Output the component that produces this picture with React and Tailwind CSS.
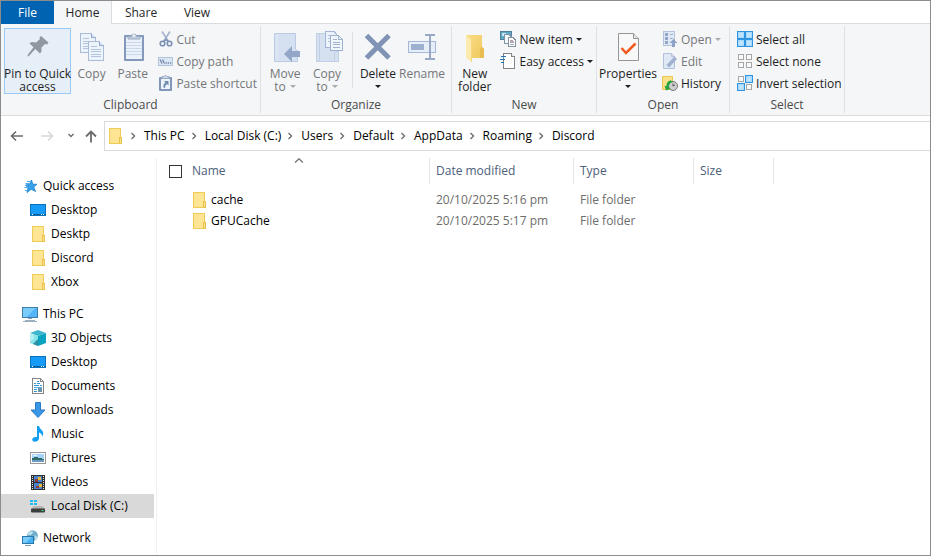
import React from "react";

/* ---------- icons ---------- */

function Svg({ w = 16, h = 16, crisp = true, children }) {
  return (
    <svg
      width={w}
      height={h}
      viewBox={`0 0 ${w} ${h}`}
      fill="none"
      className="block shrink-0"
      shapeRendering={crisp ? "crispEdges" : "auto"}
      aria-hidden="true"
    >
      {children}
    </svg>
  );
}

const PinIcon = () => (
  <Svg w={32} h={32} crisp={false}>
    <path
      fill="#8f989e"
      d="M19 5L26.500 11.500L25 13.500L23 13L19.500 16.500L19.500 20.500L18 22.500L13.200 18L6.500 25.500L5.500 25L6 23.500L11.500 16.200L7.500 12.500L9.500 11L14 11.500L18 8L17.500 6.500Z"
    />
  </Svg>
);

const Sheet = ({ x, y }) => (
  <g transform={`translate(${x} ${y})`}>
    <path d="M.5.5H11.500L15.500 4.500V19.500H.5Z" fill="#edf3fb" stroke="#aabbd6" />
    <path d="M11.500.5V4.500H15.500" fill="#d5e1f2" stroke="#94a8c8" />
    <path d="M3 5.500H9M3 8.500H13M3 10.500H13M3 13.500H13M3 15.500H13" stroke="#b5c5dd" />
  </g>
);

const CopyIcon = () => (
  <Svg w={32} h={32}>
    <Sheet x={4} y={2} />
    <Sheet x={12} y={10} />
  </Svg>
);

const PasteIcon = () => (
  <Svg w={32} h={32} crisp={false}>
    <rect x="7" y="4" width="20" height="26" rx="1" fill="#8498bb" />
    <rect x="9" y="6" width="16" height="22" fill="#eaf1fb" />
    <path d="M9 11.500H25M9 14.500H25M9 17.500H25M9 20.500H25M9 23.500H25" stroke="#cbd8ea" />
    <path d="M11 8V5.500H14.500A2.500 2.500 0 0 1 19.500 5.500H23V8Z" fill="#c3cedd" stroke="#9aaac2" />
    <circle cx="17" cy="4.500" r="1.200" fill="#f4f6f9" />
  </Svg>
);

const CutIcon = () => (
  <Svg crisp={false}>
    <path d="M5 .5L11.500 10.500M13 .5L6.500 10.500" stroke="#a5b4cc" strokeWidth="1.600" />
    <circle cx="5.500" cy="12.500" r="2.300" stroke="#7c91b5" strokeWidth="1.600" />
    <circle cx="12.500" cy="12.500" r="2.300" stroke="#7c91b5" strokeWidth="1.600" />
    <path d="M7 10.500L9 8.500L11 10.500" stroke="#7c91b5" strokeWidth="1.500" />
  </Svg>
);

const CopyPathIcon = () => (
  <Svg crisp={false}>
    <rect x="1.500" y="4.500" width="14" height="8" fill="#dbe6f5" stroke="#b3c3dc" />
    <path d="M3 6.500L5 10.500M5.500 6.500L7.500 10.500" stroke="#6d81a5" strokeWidth="1.200" />
    <path d="M8.500 10H9.800M10.700 10H12M13 10H14.200" stroke="#6d81a5" strokeWidth="1.300" />
  </Svg>
);

const ShortcutIcon = () => (
  <Svg crisp={false}>
    <g transform="translate(1 0)">
      <rect x="1" y="2" width="13" height="14" rx="1" fill="#8196ba" />
      <rect x="3" y="4" width="9" height="10" fill="#edf3fb" />
      <path d="M4 3.500V1.500H6L7 .5H8L9 1.500H11V3.500Z" fill="#c9d4e4" stroke="#9aabc5" />
      <path d="M6 6H10.500V10.500L9 9Q7 10 7 13L5.500 12.500Q5 9 7.500 7.500Z" fill="#6f88b2" />
    </g>
  </Svg>
);

const MoveIcon = () => (
  <Svg w={32} h={32} crisp={false}>
    <path d="M5.500 2.500H26.500V18L28.500 20V30.500H5.500Z" fill="#d5e0f1" stroke="#bccbe3" />
    <path d="M8 3V30" stroke="#e5edf8" />
    <path d="M15 23L23 15V20H31V26H23V31Z" fill="#93a7c9" />
  </Svg>
);

const CopyToIcon = () => (
  <Svg w={32} h={32}>
    <path d="M5.500 2.500H25V20H27.500V30.500H5.500Z" fill="#d5e0f1" stroke="#c2d0e6" />
    <path d="M8.500 3V30M23.500 21V30" stroke="#c2d0e6" />
    <path d="M14.500.5H23L26 4V16.500H14.500Z" fill="#edf3fb" stroke="#a5b7d4" />
    <path d="M17 4.500H20M17 7.500H20M17 10.500H20" stroke="#b5c5dd" />
    <path d="M19.500 4.500H27.500L31 8V19.500H19.500Z" fill="#f1f6fc" stroke="#9db0d0" />
    <path d="M27.500 4.500V8H31M22 8.500H26M22 11.500H29M22 13.500H29M22 16.500H29" stroke="#a0b2cf" />
  </Svg>
);

const DeleteIcon = () => (
  <Svg w={32} h={32} crisp={false}>
    <path d="M4.500 4.500L27 27M27 4.500L4.500 27" stroke="#8193b4" strokeWidth="5" />
  </Svg>
);

const RenameIcon = () => (
  <Svg w={32} h={32}>
    <rect x="2.500" y="10.500" width="27" height="11" fill="#e6eefa" stroke="#a5b8d9" />
    <rect x="5" y="13" width="13" height="6" fill="#9db0d0" />
    <path d="M24 5V27" stroke="#97a9c7" strokeWidth="2" />
    <path d="M19 4H23L24 5L25 4H29M19 28H23L24 27L25 28H29" stroke="#97a9c7" strokeWidth="2" />
  </Svg>
);

const NewFolderIcon = () => (
  <Svg w={32} h={32} crisp={false}>
    <defs>
      <linearGradient id="nf" x1="0" y1="0" x2="1" y2="1">
        <stop offset="0" stopColor="#f9dd87" />
        <stop offset="1" stopColor="#f0c75c" />
      </linearGradient>
    </defs>
    <path d="M7 4H23V16L25 18V27H7Z" fill="url(#nf)" />
    <path d="M23 16L25 18V27H21V18Z" fill="#e9bd50" />
    <path d="M7 4L12.500 9V31L7 27Z" fill="#fdeaae" />
    <path d="M12.500 9V31" stroke="#f5d67c" />
  </Svg>
);

const NewItemIcon = () => (
  <Svg>
    <rect x=".5" y=".5" width="11" height="8" fill="#5fa9c5" stroke="#517f9c" />
    <rect x="2" y="2" width="4" height="3" fill="#c8e8f3" />
    <path d="M4.500 3.500H9L11.500 6V12.500H4.500Z" fill="#f5f8fa" stroke="#8296a6" />
    <path d="M8.500 6.500H13L15.500 9V15.500H8.500Z" fill="#fff" stroke="#8593a0" />
    <path d="M10 9.500H13M10 11.500H14M10 13.500H14" stroke="#9babbb" />
    <path d="M10 10.500H14" stroke="#dfa0a0" />
  </Svg>
);

const EasyAccessIcon = () => (
  <Svg>
    <path d="M3.500.5H11.500L14.500 3.500V15.500H3.500Z" fill="#fff" stroke="#858585" />
    <path d="M11.500.5V3.500H14.500" fill="#e7e7e7" stroke="#858585" />
    <path d="M1 3.500H6M0 6.500H5M1 9.500H4" stroke="#1d75bd" strokeWidth="1" />
  </Svg>
);

const PropertiesIcon = () => (
  <Svg w={32} h={32} crisp={false}>
    <path d="M6.500 2.500H21.500L26.500 7.500V29.500H6.500Z" fill="#f8f8f8" stroke="#969696" />
    <path d="M21.500 2.500V7.500H26.500" fill="#e2e2e2" stroke="#969696" />
    <path d="M9.500 17L14 22L23.500 12.500" stroke="#f2591d" strokeWidth="2.500" />
  </Svg>
);

const OpenIcon = () => (
  <Svg>
    <rect x="1.500" y=".5" width="11" height="14" fill="#dfe8f5" stroke="#b2c2db" />
    <path d="M3 2H6V5H3ZM3 6H6V9H3ZM3 10H6V13H3Z" fill="#91a5c6" />
    <path d="M7.500 3.500H11M7.500 7.500H11" stroke="#9fb1ce" />
    <path d="M11.500 8L15.500 12H13V16H10V12H7.500Z" fill="#8ea3c5" />
  </Svg>
);

const EditIcon = () => (
  <Svg crisp={false}>
    <path d="M1.500.5H9.500L12.500 3.500V15.500H1.500Z" fill="#dfe8f5" stroke="#b2c2db" />
    <path d="M9.500.5V3.500H12.500" stroke="#b2c2db" />
    <path d="M4 15L4.500 12L12.500 3.500L15 6L7 14.500Z" fill="#9fb1ce" />
    <path d="M4 15L4.500 12L7 14.500Z" fill="#eef3fa" />
  </Svg>
);

const HistoryIcon = () => (
  <Svg crisp={false}>
    <path d="M.5 1.500H10.500V9H12V14.500H.5Z" fill="#fbe08a" stroke="#ecc74f" />
    <circle cx="11" cy="11" r="4.500" fill="#cfcfcf" stroke="#777" />
    <path d="M11 8.500V11L13 10" stroke="#555" />
    <path d="M8.500 5.200A6 6 0 0 0 4.500 11.500L2.500 10.500L4 15.500L8.800 13.500L7 12.500A4.500 4.500 0 0 1 11 7Z" fill="#24a343" />
  </Svg>
);

const Box = ({ x, y, on }) =>
  on ? (
    <>
      <rect x={x} y={y} width="8" height="8" fill="#2e95e3" />
      <rect x={x + 1} y={y + 1} width="6" height="6" fill="#a8d8fb" />
      <rect x={x + 2} y={y + 2} width="4" height="4" fill="#bfe4ff" />
    </>
  ) : (
    <rect x={x + 1.5} y={y + 1.5} width="5" height="5" fill="#fafafa" stroke="#a6a6a6" />
  );

const SelectIcon = ({ on }) => (
  <Svg>
    <Box x={0} y={0} on={on[0]} />
    <Box x={8} y={0} on={on[1]} />
    <Box x={0} y={8} on={on[2]} />
    <Box x={8} y={8} on={on[3]} />
  </Svg>
);

const FolderIcon = () => (
  <Svg>
    <rect x="2.500" y=".5" width="11" height="15" fill="#fee594" stroke="#f0cb55" />
    <rect x="12.500" y="9.500" width="2" height="6" fill="#fce28a" stroke="#e9c24b" />
  </Svg>
);

const StarIcon = () => (
  <Svg crisp={false}>
    <path
      d="M9.500 2L10.800 6.200L15 6.300L11.800 9L13.500 13.500L9.200 11.300L5 14.500L6 9.800L3.500 7L7.500 6.300Z"
      fill="#35a2ee"
      stroke="#1b80cc"
      strokeWidth=".8"
    />
    <path d="M5 3.500H8.500M3.500 5.500H7.500M2.500 9.500H6M3 12.500H5.500" stroke="#4fa9e4" />
  </Svg>
);

const DesktopIcon = () => (
  <Svg>
    <rect x=".5" y="2.500" width="15" height="11" fill="#169cf8" stroke="#0b72b9" />
    <path d="M1 12.500H15" stroke="#095f9e" />
    <path d="M2 12.500H3M11 12.500H12M13 12.500H14" stroke="#fff" />
  </Svg>
);

const PcIcon = () => (
  <Svg>
    <rect x=".5" y="1.500" width="15" height="10" fill="#54b6f6" stroke="#3e7ea6" />
    <path d="M1 2H13L5 11H1Z" fill="#7accfc" />
    <path d="M6 12.500H10" stroke="#8aa0b2" />
    <path d="M1 15.500H15M3 14.500H13" stroke="#9baebe" />
  </Svg>
);

const CubeIcon = () => (
  <Svg crisp={false}>
    <path d="M8 0L16 3L8 6L0 3Z" fill="#3cb6cc" />
    <path d="M0 3L8 6V16L0 13Z" fill="#86e3e8" />
    <path d="M8 6L16 3V13L8 16Z" fill="#09a2bf" />
    <path d="M0 3L4 4.500V9L0 12Z" fill="#b3f0f2" />
    <path d="M8 9V16L3 14Z" fill="#2f8fa4" />
  </Svg>
);

const DocumentIcon = () => (
  <Svg>
    <path d="M2.500.5H10.500L13.500 3.500V15.500H2.500Z" fill="#fff" stroke="#858585" />
    <path d="M10.500.5V3.500H13.500" stroke="#858585" />
    <path d="M7 3.500H9M4 5.500H6M7 5.500H10M4 7.500H9M10 7.500H12M4 11.500H7M4 13.500H7" stroke="#3195d1" />
    <path d="M4 9.500H12" stroke="#52aadd" />
    <path d="M8 10H12V14H8Z" fill="#6e94ab" />
  </Svg>
);

const DownloadIcon = () => (
  <Svg crisp={false}>
    <path d="M5.500.5H10.500V8H15L8 15.500L1 8H5.500Z" fill="#3a96e7" stroke="#2c79c2" />
  </Svg>
);

const MusicIcon = () => (
  <Svg crisp={false}>
    <path d="M7 0H9Q9.500 2.500 12 4.500Q14.500 7 12 11Q12.500 7.500 9 6.500V12.500Q8.500 15.500 5 15.800Q2 15.500 2.200 13Q3 10.500 7 11Z" fill="#109ef3" />
  </Svg>
);

const PictureIcon = () => (
  <Svg>
    <rect x=".5" y="2.500" width="15" height="11" fill="#fff" stroke="#989898" />
    <rect x="2" y="4" width="12" height="8" fill="#a5d2f6" />
    <path d="M2 8L6 7L9 8L14 9V10H2Z" fill="#2f6b69" />
    <path d="M2 10H14V12H2Z" fill="#6c9cc4" />
    <path d="M3 5.500H7" stroke="#e5f4fd" />
  </Svg>
);

const VideoIcon = () => (
  <Svg>
    <rect x="1" y="1" width="14" height="15" fill="#2e2e2e" />
    <rect x="4" y="2" width="8" height="6" fill="#4c83cf" />
    <rect x="4" y="9" width="8" height="6" fill="#4c83cf" />
    <path d="M2.500 2V16M13.500 2V16" stroke="#e6e6e6" strokeDasharray="1 1" />
    <path d="M8 3H11V6H8ZM9 10H12V13H9Z" fill="#e4bb33" />
    <path d="M5 5H8V8H5ZM6 12H9V14H6Z" fill="#8b3c36" />
  </Svg>
);

const DiskIcon = () => (
  <Svg crisp={false}>
    <path d="M0 2H3V4H0ZM4 2H7V4H4ZM0 5H3V7H0ZM4 5H7V7H4Z" fill="#1cbcf1" />
    <path d="M4 8H12L15.500 11H1Z" fill="#b5b5b5" />
    <rect x="1" y="10.500" width="14" height="4" rx="1" fill="#3d3d3d" />
    <rect x="11.500" y="12" width="2" height="1" fill="#43f36a" />
  </Svg>
);

const NetworkIcon = () => (
  <Svg crisp={false}>
    <circle cx="10.500" cy="5.700" r="5.400" fill="#6fabca" />
    <path d="M7 2Q10 .5 11.500 2L9 5H6Q5.500 4 7 2ZM12.500 5L15.500 7Q15 10 13 10Z" fill="#bde2ee" />
    <rect x=".5" y="6.500" width="11" height="7" fill="#45b0f4" stroke="#2b77a8" />
    <path d="M1 7H10L3.500 13H1Z" fill="#7bcbfb" />
    <path d="M3 15.500H9" stroke="#7ba1b8" />
  </Svg>
);

const Caret = ({ muted }) => (
  <svg width="6" height="3" viewBox="0 0 6 3" className="block shrink-0" aria-hidden="true">
    <path d="M0 0H6L3 3Z" fill={muted ? "#a9abae" : "#1e1e1e"} />
  </svg>
);

const Chevron = () => (
  <Svg w={6} h={8} crisp={false}>
    <path d="M1.500 1L4.500 4L1.500 7" stroke="#6e6e6e" strokeWidth="1.400" />
  </Svg>
);

/* ---------- ribbon ---------- */

function BigButton({ icon, lines, caret, muted, width = "w-[42px]", active }) {
  const tone = muted ? "text-[#747678]" : "text-[#1e1e1e]";
  const frame = active ? "border-[#99c9f5] bg-[#e6eef7]" : "border-transparent";
  return (
    <button type="button" className={`flex h-[66px] flex-col items-center border pt-0.5 leading-[13px] whitespace-nowrap ${width} ${tone} ${frame}`}>
      <span className="mb-1">{icon}</span>
      <span>{lines[0]}</span>
      <span className="flex h-[13px] items-center gap-1">
        {lines[1]}
        {caret && <Caret muted={muted} />}
      </span>
    </button>
  );
}

function SmallButton({ icon, label, muted, caret }) {
  return (
    <button type="button" className={`flex h-[22px] items-center gap-[3px] whitespace-nowrap ${muted ? "text-[#747678]" : "text-[#1e1e1e]"}`}>
      {icon}
      <span className="pt-px">{label}</span>
      {caret && <Caret muted={muted} />}
    </button>
  );
}

function Group({ label, width, children }) {
  return (
    <section aria-label={label} className={`my-0.5 flex shrink-0 flex-col border-r border-[#dfe1e4] ${width}`}>
      <div className="flex h-[73px] items-start px-[3px] pt-0.5">{children}</div>
      <h2 className="text-center leading-4 text-[#4b4b4b]">{label}</h2>
    </section>
  );
}

function Ribbon() {
  return (
    <div className="flex h-[92px] overflow-hidden border-b border-[#d9dbdd] bg-[#f4f6f8]">
      <Group label="Clipboard" width="w-[260px]">
        <BigButton icon={<PinIcon />} lines={["Pin to Quick", "access"]} width="w-[67px]" active />
        <BigButton icon={<CopyIcon />} lines={["Copy"]} muted />
        <BigButton icon={<PasteIcon />} lines={["Paste"]} muted />
        <div className="pl-1">
          <SmallButton icon={<CutIcon />} label="Cut" muted />
          <SmallButton icon={<CopyPathIcon />} label="Copy path" muted />
          <SmallButton icon={<ShortcutIcon />} label="Paste shortcut" muted />
        </div>
      </Group>
      <Group label="Organize" width="w-[191px]">
        <BigButton icon={<MoveIcon />} lines={["Move", "to"]} caret muted />
        <BigButton icon={<CopyToIcon />} lines={["Copy", "to"]} caret muted />
        <div className="mx-1 mt-1 h-14 border-l border-[#dfe1e4]" />
        <BigButton icon={<DeleteIcon />} lines={["Delete"]} caret />
        <BigButton icon={<RenameIcon />} lines={["Rename"]} muted width="w-[46px]" />
      </Group>
      <Group label="New" width="w-[145px]">
        <BigButton icon={<NewFolderIcon />} lines={["New", "folder"]} />
        <div className="pl-1.5">
          <SmallButton icon={<NewItemIcon />} label="New item" caret />
          <SmallButton icon={<EasyAccessIcon />} label="Easy access" caret />
        </div>
      </Group>
      <Group label="Open" width="w-[133px]">
        <BigButton icon={<PropertiesIcon />} lines={["Properties"]} caret width="w-[56px]" />
        <div className="pl-1.5">
          <SmallButton icon={<OpenIcon />} label="Open" caret muted />
          <SmallButton icon={<EditIcon />} label="Edit" muted />
          <SmallButton icon={<HistoryIcon />} label="History" />
        </div>
      </Group>
      <Group label="Select" width="w-[115px]">
        <div className="pl-1">
          <SmallButton icon={<SelectIcon on={[true, true, true, true]} />} label="Select all" />
          <SmallButton icon={<SelectIcon on={[false, false, false, false]} />} label="Select none" />
          <SmallButton icon={<SelectIcon on={[false, true, true, false]} />} label="Invert selection" />
        </div>
      </Group>
    </div>
  );
}

function Tabs() {
  return (
    <div className="flex h-[23px] text-[#262626]">
      <button type="button" className="w-[53px] bg-[#0063b1] text-white">File</button>
      <button type="button" className="w-[58px] border-r border-[#d9dbdd] bg-[#f4f6f8]">Home</button>
      <div className="flex flex-1 border-b border-[#d9dbdd] pt-0.5">
        <button type="button" className="w-[58px]">Share</button>
        <button type="button" className="w-[54px]">View</button>
      </div>
    </div>
  );
}

/* ---------- address bar ---------- */

const path = ["This PC", "Local Disk (C:)", "Users", "Default", "AppData", "Roaming", "Discord"];

function AddressBar() {
  return (
    <div className="flex items-center pt-[5px]">
      <div className="flex w-[103px] items-center pl-2">
        <button type="button" aria-label="Back">
          <Svg crisp={false}>
            <path d="M14 8H2.500M7 3.500L2.500 8L7 12.500" stroke="#6b6b6b" strokeWidth="1.600" />
          </Svg>
        </button>
        <button type="button" aria-label="Forward" className="ml-[14px]">
          <Svg crisp={false}>
            <path d="M2 8H13.500M9 3.500L13.500 8L9 12.500" stroke="#d8d8d8" strokeWidth="1.600" />
          </Svg>
        </button>
        <button type="button" aria-label="Recent locations" className="ml-3">
          <Svg w={8} h={8} crisp={false}>
            <path d="M1.500 2L4 4.500L6.500 2" stroke="#6b6b6b" strokeWidth="1.400" />
          </Svg>
        </button>
        <button type="button" aria-label="Up" className="ml-2">
          <Svg crisp={false}>
            <path d="M8 14.500V3.500M3 8.500L8 3.500L13 8.500" stroke="#6b6b6b" strokeWidth="1.800" />
          </Svg>
        </button>
      </div>
      <nav aria-label="Path" className="flex h-[30px] flex-1 items-center border-y border-l border-[#d9d9d9] pl-0.5 text-black">
        <FolderIcon />
        <ol className="flex items-center pl-0.5">
          {path.map((name) => (
            <li key={name} className="flex items-center whitespace-nowrap">
              <span className="flex w-[18px] pl-[5px]"><Chevron /></span>
              <a href="#" className="px-px">{name}</a>
            </li>
          ))}
        </ol>
      </nav>
    </div>
  );
}

/* ---------- navigation pane ---------- */

const tree = [
  {
    name: "Quick access",
    icon: <StarIcon />,
    items: [
      ["Desktop", <DesktopIcon />],
      ["Desktp", <FolderIcon />],
      ["Discord", <FolderIcon />],
      ["Xbox", <FolderIcon />],
    ],
  },
  {
    name: "This PC",
    icon: <PcIcon />,
    items: [
      ["3D Objects", <CubeIcon />],
      ["Desktop", <DesktopIcon />],
      ["Documents", <DocumentIcon />],
      ["Downloads", <DownloadIcon />],
      ["Music", <MusicIcon />],
      ["Pictures", <PictureIcon />],
      ["Videos", <VideoIcon />],
      ["Local Disk (C:)", <DiskIcon />],
    ],
  },
  { name: "Network", icon: <NetworkIcon />, items: [] },
];

function Sidebar() {
  return (
    <nav aria-label="Folders" className="mt-[7px] flex w-[156px] shrink-0 flex-col gap-2 border-r border-[#f0f0f0] pt-4 pr-0.5 text-black">
      {tree.map((section) => (
        <div key={section.name}>
          <a href="#" className="flex h-6 items-center gap-[5px] pl-[21px]">
            {section.icon}
            {section.name}
          </a>
          <ul>
            {section.items.map(([name, icon]) => (
              <li key={name}>
                <a href="#" className={`flex h-6 items-center gap-[5px] pl-[29px] ${name === "Local Disk (C:)" ? "bg-[#d9d9d9]" : ""}`}>
                  {icon}
                  {name}
                </a>
              </li>
            ))}
          </ul>
        </div>
      ))}
    </nav>
  );
}

/* ---------- file list ---------- */

const files = [
  { name: "cache", date: "20/10/2025 5:16 pm", type: "File folder" },
  { name: "GPUCache", date: "20/10/2025 5:17 pm", type: "File folder" },
];

function FileList() {
  return (
    <main className="min-w-0 flex-1 overflow-hidden pt-[7px] pl-3">
      <table className="w-[605px] table-fixed border-separate border-spacing-0 text-left">
        <colgroup>
          <col className="w-[261px]" />
          <col className="w-[144px]" />
          <col className="w-[120px]" />
          <col className="w-20" />
        </colgroup>
        <thead className="text-[#4c607a]">
          <tr className="h-[26px]">
            <th scope="col" className="relative border-r border-[#e5e5e5] p-0 font-normal">
              <svg width="9" height="5" viewBox="0 0 9 5" className="absolute top-0 left-1/2 -translate-x-1/2" aria-hidden="true">
                <path d="M.5 4.500L4.500.8L8.500 4.500" fill="none" stroke="#6b6b6b" strokeWidth="1.200" />
              </svg>
              <div className="flex items-center gap-[10px]">
                <input type="checkbox" aria-label="Select all items" className="h-[13px] w-[13px] appearance-none border border-[#333] bg-white" />
                Name
              </div>
            </th>
            <th scope="col" className="border-r border-[#e5e5e5] p-0 pl-1.5 font-normal">Date modified</th>
            <th scope="col" className="border-r border-[#e5e5e5] p-0 pl-1.5 font-normal">Type</th>
            <th scope="col" className="border-r border-[#e5e5e5] p-0 pl-1.5 font-normal">Size</th>
          </tr>
        </thead>
        <tbody className="text-[#6d6d6d] before:block before:h-[5px]">
          {files.map((file) => (
            <tr key={file.name} className="h-[21px]">
              <td className="p-0 pl-[22px] text-black">
                <a href="#" className="flex items-center gap-1">
                  <FolderIcon />
                  {file.name}
                </a>
              </td>
              <td className="p-0 pl-1.5">{file.date}</td>
              <td className="p-0 pl-1.5">{file.type}</td>
              <td className="p-0 pl-1.5" />
            </tr>
          ))}
        </tbody>
      </table>
    </main>
  );
}

export default function App() {
  return (
    <div className="flex min-h-screen flex-col overflow-hidden border border-[#8c8c8c] bg-white font-['Open_Sans','Noto_Sans',sans-serif] text-[12px] leading-4">
      <Tabs />
      <Ribbon />
      <AddressBar />
      <div className="flex flex-1">
        <Sidebar />
        <FileList />
      </div>
    </div>
  );
}
